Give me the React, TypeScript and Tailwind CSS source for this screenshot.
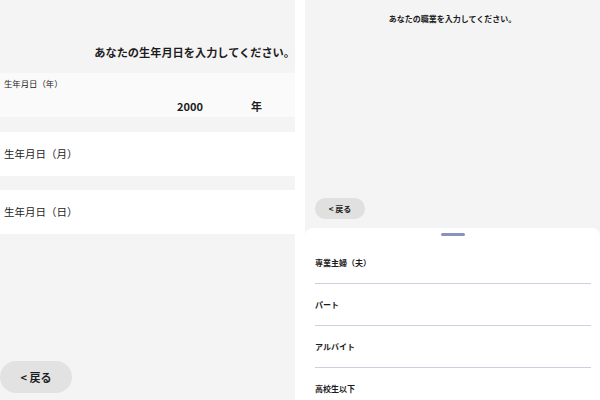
const font = { fontFamily: '"Noto Sans CJK JP", "Noto Sans", sans-serif' };

const jobs = ["専業主婦（夫）", "パート", "アルバイト", "高校生以下"];

function BirthdayPanel() {
  return (
    <div className="flex h-[400px] w-[295px] flex-col bg-[#f4f4f4] text-[#1c1c1c]">
      <div className="flex h-[73px] items-start justify-end pt-[45px]">
        <p className="text-[11.2px] font-bold leading-[14px]">あなたの生年月日を入力してください。</p>
      </div>

      <div className="h-[44px] bg-[#fafafa] pt-[5px]">
        <p className="pl-[4px] text-[8.4px] leading-[11px]">生年月日（年）</p>
        <div className="mt-[10px] flex items-center justify-end gap-[48px] pr-[33px] text-[11px] font-bold leading-[14px]">
          <span>2000</span>
          <span>年</span>
        </div>
      </div>

      <div className="mt-[15px] flex h-[44px] items-center bg-white pl-[4px]">
        <span className="text-[10.5px] leading-[14px]">生年月日（月）</span>
      </div>

      <div className="mt-[14px] flex h-[44px] items-center bg-white pl-[4px]">
        <span className="text-[10.5px] leading-[14px]">生年月日（日）</span>
      </div>

      <button className="mb-[7px] mt-auto flex h-[32px] w-[72px] items-center justify-center rounded-full bg-[#e2e2e2] text-[11px] font-bold text-[#1c1c1c]">
        &lt; 戻る
      </button>
    </div>
  );
}

function JobPanel() {
  return (
    <div className="flex h-[400px] w-[295px] flex-col overflow-hidden bg-[#f4f4f4] text-[#1c1c1c]">
      <p className="pt-[13px] text-center text-[8px] font-bold leading-[12px]">あなたの職業を入力してください。</p>

      <button className="ml-[10px] mt-auto flex h-[21px] w-[50px] items-center justify-center rounded-full bg-[#e0e0e0] text-[8px] font-bold">
        &lt; 戻る
      </button>

      <div className="mt-[9px] h-[172px] shrink-0 overflow-hidden rounded-t-[8px] bg-white">
        <div className="mx-auto mt-[5px] h-[3px] w-[24px] rounded-full bg-[#8c90bf]" />
        <ul className="mt-[6px] pl-[10px] pr-[9px]">
          {jobs.map((job) => (
            <li
              key={job}
              className="flex h-[42px] items-center border-b border-[#cdcee6] text-[8px] font-bold leading-[12px]"
            >
              {job}
            </li>
          ))}
        </ul>
      </div>
    </div>
  );
}

export default function App() {
  return (
    <div className="flex h-[400px] w-[600px] justify-between overflow-hidden bg-white" style={font}>
      <BirthdayPanel />
      <JobPanel />
    </div>
  );
}
